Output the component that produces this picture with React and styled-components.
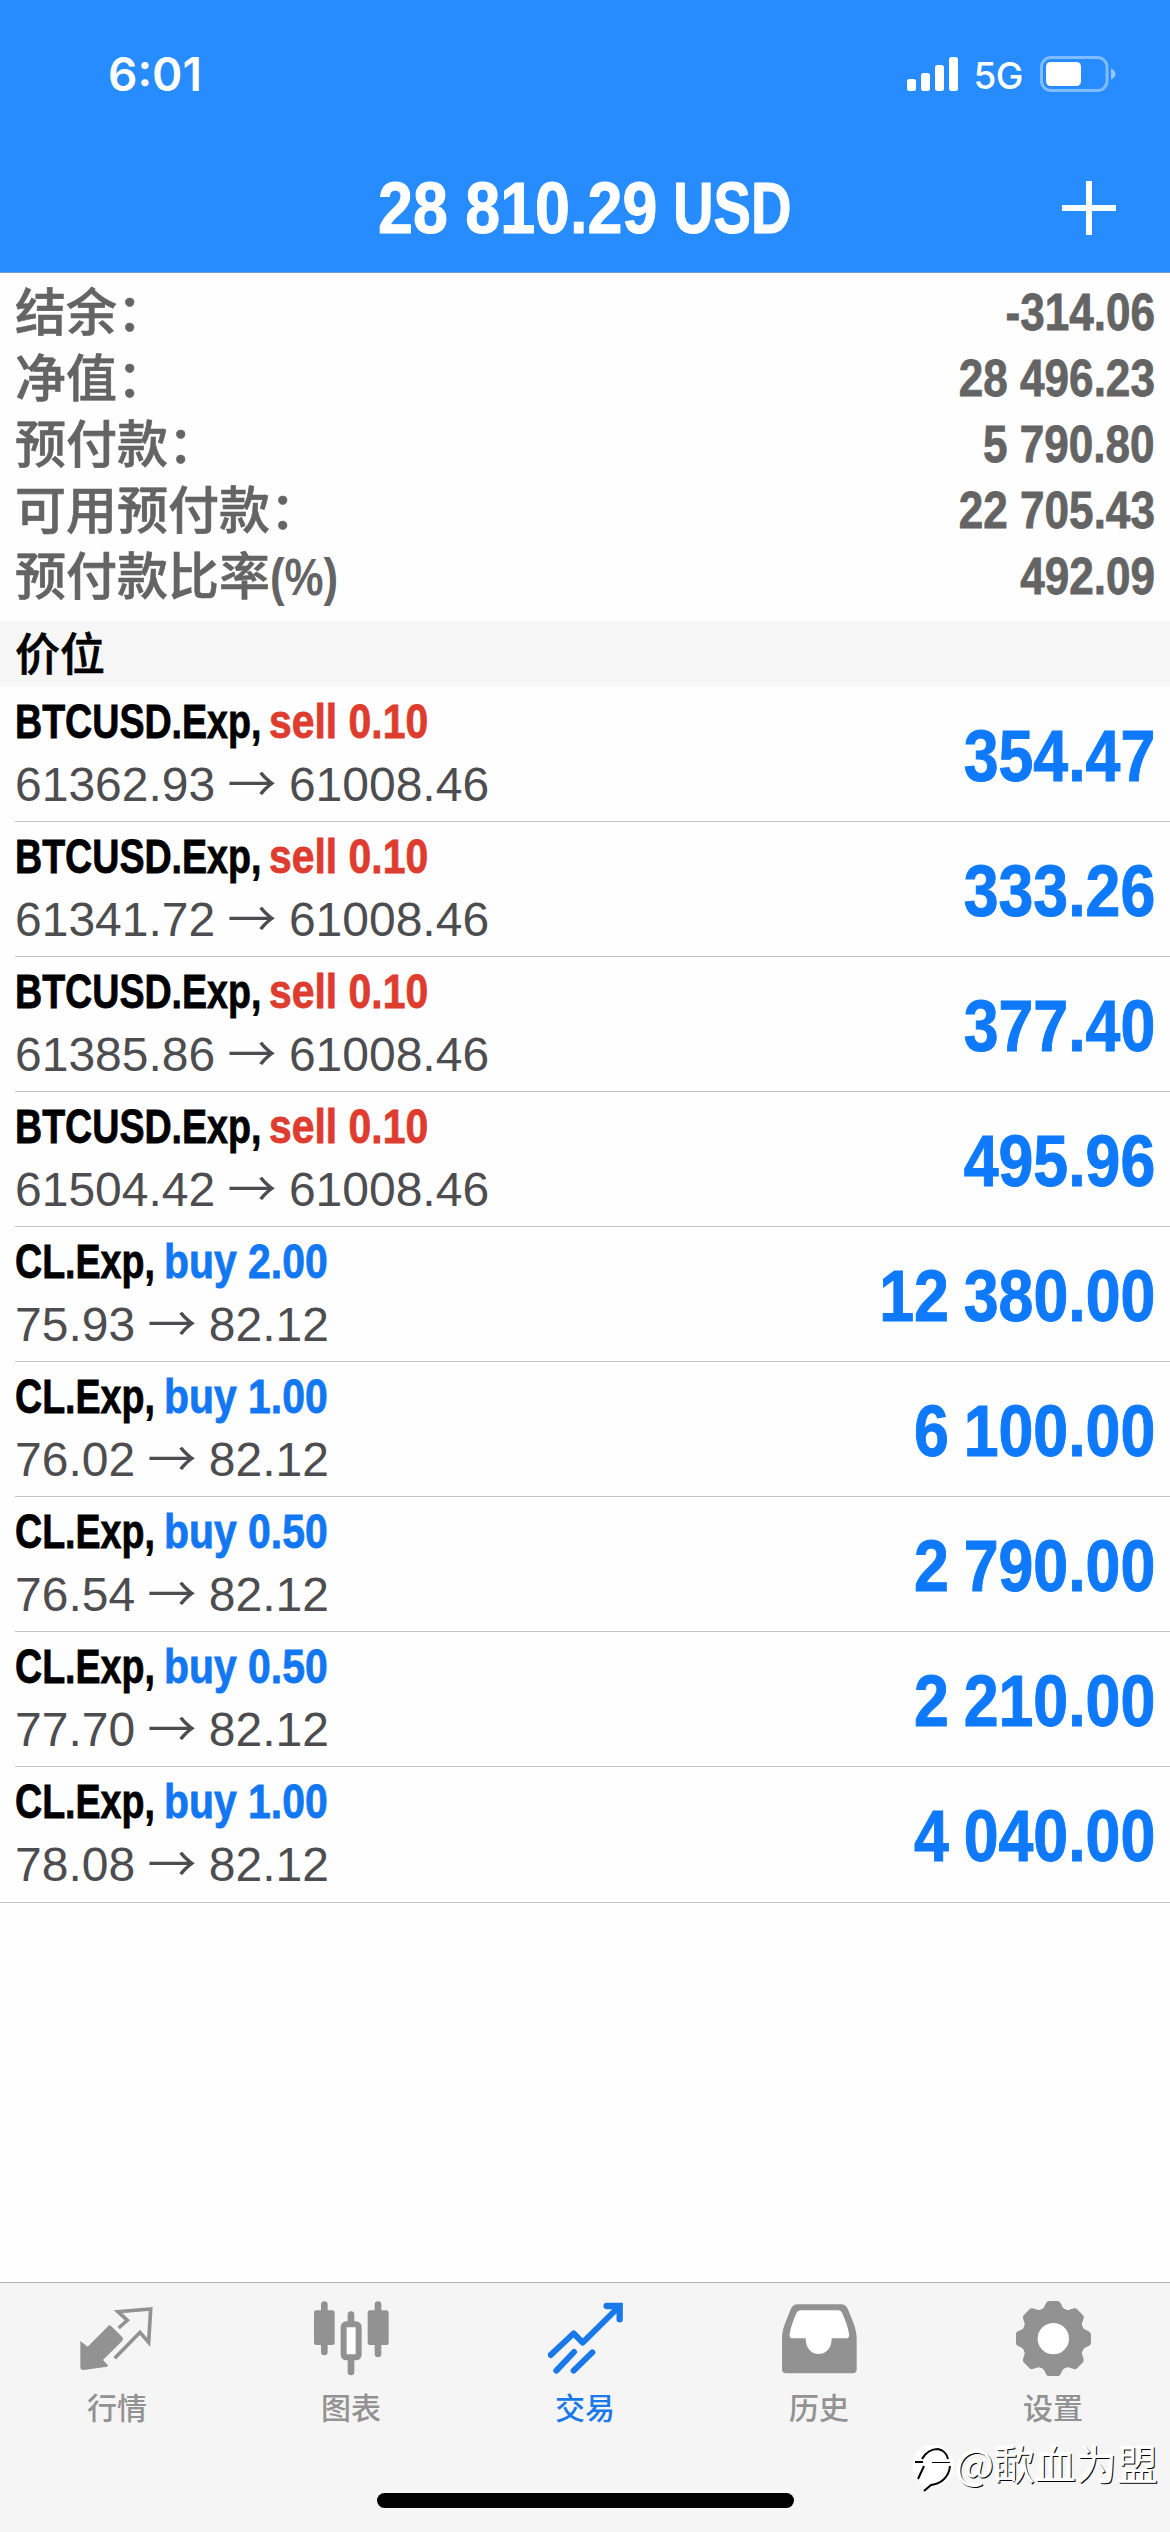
import React, { Component } from 'react';
import styled, { createGlobalStyle } from 'styled-components';

const GlobalStyle = createGlobalStyle`
    * { box-sizing: border-box; }
    body {
        margin: 0;
        background: #fefefe;
        font-family: "Liberation Sans", "Noto Sans CJK SC", sans-serif;
    }`

const Screen = styled.div`
    position: relative;
    display: flex;
    flex-direction: column;
    width: 1170px;
    height: 2532px;
    overflow: hidden;
    background: #fefefe;`

const Header = styled.header`
    height: 273px;
    background: #268cff;
    border-bottom: 1px solid #6f9fd8;
    color: #fff;`

const StatusBar = styled.div`
    display: flex;
    align-items: center;
    justify-content: space-between;
    height: 142px;
    padding: 6px 54px 0 108px;
    font-family: Inter, sans-serif;`

const Clock = styled.span`
    font-size: 46px;
    font-weight: 600;
    line-height: 60px;`

const StatusIcons = styled.div`
    display: flex;
    align-items: center;`

const Network = styled.span`
    margin: 4px 17px 0 14px;
    font-size: 37px;
    font-weight: 500;
    line-height: 48px;
    letter-spacing: -0.5px;`

const NavBar = styled.div`
    display: grid;
    grid-template-columns: 1fr auto 1fr;
    align-items: center;
    height: 131px;
    padding: 0 54px;`

const Title = styled.h1`
    grid-column: 2;
    display: flex;
    margin: 0;
    font-size: 72px;
    line-height: 80px;
    white-space: nowrap;
    -webkit-text-stroke: 1px currentColor;`

const Balance = styled.span`
    width: 295px;
    transform: scaleX(0.872);
    transform-origin: left;`

const Currency = styled.span`
    width: 119px;
    transform: scaleX(0.78);
    transform-origin: left;`

const AddButton = styled.button`
    justify-self: end;
    display: flex;
    padding: 0;
    border: 0;
    background: none;
    color: inherit;`

const Summary = styled.section`
    padding: 7px 15px 11px;`

const SummaryRow = styled.div`
    display: flex;
    justify-content: space-between;
    height: 66px;
    font-size: 51px;
    font-weight: 500;
    line-height: 66px;
    color: #646464;`

const Label = styled.span`
    padding-top: 1px;
    -webkit-text-stroke: 0.6px currentColor;`

const Unit = styled.span`
    display: inline-block;
    font-weight: bold;
    -webkit-text-stroke: 0;
    transform: scaleX(0.86);
    transform-origin: left;`

const Amount = styled.span`
    font-weight: bold;
    white-space: nowrap;
    -webkit-text-stroke: 0.8px currentColor;
    transform: scaleX(0.864);
    transform-origin: right;`

const SectionTitle = styled.h2`
    height: 66px;
    margin: 0;
    padding: 2px 0 0 15px;
    background: #f6f6f6;
    border-bottom: 5px solid #f9f9f9;
    font-size: 45px;
    font-weight: 500;
    line-height: 66px;
    color: #000;
    -webkit-text-stroke: 0.6px currentColor;`

const Position = styled.div`
    display: flex;
    justify-content: space-between;
    height: 135px;
    margin-left: 15px;
    padding: 7px 15px 0 0;
    border-bottom: 1px solid #c3c3c5;

    /* the separator under the last position runs edge to edge */
    &:last-child {
        height: 136px;
        margin-left: 0;
        padding-left: 15px;
    }`

const Deal = styled.div`
    display: flex;
    font-size: 48px;
    font-weight: bold;
    line-height: 56px;
    white-space: nowrap;
    -webkit-text-stroke: 0.8px currentColor;`

const Ticker = styled.span`
    width: ${props => props.$width}px;
    color: #000;
    transform: scaleX(0.783);
    transform-origin: left;`

const Side = styled.span`
    color: ${props => props.$side === 'sell' ? '#dd3c2e' : '#1277f3'};
    transform: scaleX(0.852);
    transform-origin: left;`

const Prices = styled.div`
    font-size: 48px;
    line-height: 70px;
    color: #4d4d50;
    white-space: nowrap;`

const Arrow = styled.span`
    display: inline-block;
    width: 47px;
    font-family: "Noto Sans CJK SC", sans-serif;
    font-size: 49px;
    line-height: 60px;
    text-indent: -1px;
    vertical-align: -1px;`

const Profit = styled.div`
    font-size: 72px;
    font-weight: bold;
    line-height: 125px;
    color: #0e7afb;
    white-space: nowrap;
    word-spacing: -3px;
    -webkit-text-stroke: 1px currentColor;
    transform: scaleX(0.87);
    transform-origin: right;`

const TabBar = styled.nav`
    display: grid;
    grid-template-columns: repeat(5, 1fr);
    height: 250px;
    margin-top: auto;
    padding-top: 18px;
    border-top: 1px solid #b2b2b2;
    background: #f5f5f5;`

const Tab = styled.div`
    display: flex;
    flex-direction: column;
    align-items: center;
    font-size: 30px;
    font-weight: 500;
    line-height: 40px;
    color: ${props => props.$active ? '#1a79ea' : '#929292'};

    svg { margin-bottom: 13px; }`

const HomeIndicator = styled.div`
    position: absolute;
    left: 377px;
    bottom: 24px;
    width: 417px;
    height: 15px;
    border-radius: 8px;
    background: #000;`

const Watermark = styled.div`
    position: absolute;
    right: 12px;
    bottom: 40px;
    display: flex;
    align-items: center;
    font-family: "Noto Sans CJK SC", sans-serif;
    font-size: 41px;
    line-height: 60px;
    color: #fff;
    text-shadow: 1px 1px 0 #000, -1px -1px 1px #fff;
    white-space: nowrap;

    svg { margin-top: 11px; }`

const summary = [
    { label: '结余：', value: '-314.06' },
    { label: '净值：', value: '28 496.23' },
    { label: '预付款：', value: '5 790.80' },
    { label: '可用预付款：', value: '22 705.43' },
    { label: '预付款比率', unit: '(%)', value: '492.09' }
]

const tickerWidths = { 'BTCUSD.Exp': 254, 'CL.Exp': 149 }

const SignalIcon = () => (
    <svg width="52" height="36" viewBox="0 0 52 36" fill="#fff">
        <rect x="0" y="23" width="9" height="12" rx="2.5" />
        <rect x="14" y="17" width="9" height="18" rx="2.5" />
        <rect x="28" y="9" width="9" height="26" rx="2.5" />
        <rect x="42" y="1" width="9" height="34" rx="2.5" />
    </svg>
)

const BatteryIcon = () => (
    <svg width="76" height="36" viewBox="0 0 76 36">
        <rect x="1.5" y="1.5" width="65.5" height="33" rx="9.5" fill="none" stroke="#fff" strokeOpacity="0.42" strokeWidth="3" />
        <rect x="6" y="6" width="35" height="24" rx="4.5" fill="#fff" />
        <path d="M71 12.500C77 15 77 21 71 23.500Z" fill="#fff" fillOpacity="0.5" />
    </svg>
)

const PlusIcon = () => (
    <svg width="54" height="54" viewBox="0 0 54 54" stroke="#fff" strokeWidth="6">
        <path d="M27 0V54M0 27H54" />
    </svg>
)

const TabIcon = ({ children }) => (
    <svg width="75" height="75" viewBox="0 0 225 225" fill="currentColor" stroke="none">{children}</svg>
)

const QuotesIcon = () => (
    <TabIcon>
        <path d="M1 120L23 137L84 76Q89 70 94 76L127 109Q132 114 127 119L69 177L84 193Q85 196 80 197L12 207Q1 208 1 198Z" />
        <path d="M116 81L142 58L114 32L212 24L206 124L180 94L104 172" fill="none" stroke="currentColor" strokeWidth="11" />
    </TabIcon>
)

const ChartIcon = () => (
    <TabIcon>
        <rect x="0" y="28" width="62" height="104" rx="7" />
        <rect x="21" y="1" width="20" height="162" rx="10" />
        <rect x="101" y="31" width="20" height="40" rx="10" />
        <rect x="101" y="165" width="20" height="58" rx="10" />
        <rect x="89" y="70" width="45" height="99" rx="8" fill="#fff" stroke="currentColor" strokeWidth="18" />
        <rect x="161" y="28" width="63" height="104" rx="7" />
        <rect x="182" y="1" width="20" height="168" rx="10" />
    </TabIcon>
)

const TradeIcon = () => (
    <TabIcon>
        <g fill="none" stroke="currentColor" strokeWidth="18" strokeLinecap="round">
            <path d="M8 162L77 97L104 125L214 16" strokeLinejoin="round" />
            <path d="M176 15H215V55" strokeWidth="19" />
            <path d="M25 209L78 153M77 209L133 154" />
        </g>
    </TabIcon>
)

const HistoryIcon = () => (
    <TabIcon>
        <path d="M46 10H178C190 10 196 20 200 30C212 60 224 85 224 112V205Q224 217 212 217H12Q0 217 0 205V112C0 85 12 60 24 30C28 20 34 10 46 10Z" />
        <path d="M56 28H168Q177 28 181 37C190 58 198 80 201 98Q203 112 192 112H149C149 142 133 159 110 159C87 159 71 142 71 112H32Q21 112 23 98C26 80 34 58 43 37Q47 28 56 28Z" fill="#fff" />
    </TabIcon>
)

const SettingsIcon = () => (
    <TabIcon>
        <g transform="translate(112 113)">
            <circle r="47" fill="#fff" />
            <circle r="71" fill="none" stroke="currentColor" strokeWidth="48" />
            {[0, 45, 90, 135, 180, 225, 270, 315].map(angle => (
                <path key={angle} d="M-42 -84C-28 -88 -27 -97 -22 -106Q-19 -113 -11 -113H11Q19 -113 22 -106C27 -97 28 -88 42 -84Z" transform={`rotate(${angle})`} />
            ))}
        </g>
    </TabIcon>
)

const WatermarkLogo = () => (
    <svg width="42" height="50" viewBox="0 0 42 50" fill="none">
        <circle cx="20" cy="24" r="21" fill="#fff" />
        <path d="M2 20H10M11 24L5 37M9 17C13 10 18 7 25 7C30 8 34 12 35 17M37 24C36 35 28 42 18 43L11 49" stroke="#000" strokeWidth="2" />
        <path d="M19 20.500H37" stroke="#000" strokeWidth="1" />
    </svg>
)

const tabs = [
    { label: '行情', Icon: QuotesIcon },
    { label: '图表', Icon: ChartIcon },
    { label: '交易', Icon: TradeIcon, active: true },
    { label: '历史', Icon: HistoryIcon },
    { label: '设置', Icon: SettingsIcon }
]

class TradePage extends Component {
    state = {
        positions: [
            { symbol: 'BTCUSD.Exp', side: 'sell', volume: '0.10', open: '61362.93', current: '61008.46', profit: '354.47' },
            { symbol: 'BTCUSD.Exp', side: 'sell', volume: '0.10', open: '61341.72', current: '61008.46', profit: '333.26' },
            { symbol: 'BTCUSD.Exp', side: 'sell', volume: '0.10', open: '61385.86', current: '61008.46', profit: '377.40' },
            { symbol: 'BTCUSD.Exp', side: 'sell', volume: '0.10', open: '61504.42', current: '61008.46', profit: '495.96' },
            { symbol: 'CL.Exp', side: 'buy', volume: '2.00', open: '75.93', current: '82.12', profit: '12 380.00' },
            { symbol: 'CL.Exp', side: 'buy', volume: '1.00', open: '76.02', current: '82.12', profit: '6 100.00' },
            { symbol: 'CL.Exp', side: 'buy', volume: '0.50', open: '76.54', current: '82.12', profit: '2 790.00' },
            { symbol: 'CL.Exp', side: 'buy', volume: '0.50', open: '77.70', current: '82.12', profit: '2 210.00' },
            { symbol: 'CL.Exp', side: 'buy', volume: '1.00', open: '78.08', current: '82.12', profit: '4 040.00' }
        ]
    }

    render() {
        const positionLoop = this.state.positions.map((item, i) => {
            return (
                <Position key={i}>
                    <div>
                        <Deal>
                            <Ticker $width={tickerWidths[item.symbol]}>{item.symbol},</Ticker>
                            <Side $side={item.side}>{item.side} {item.volume}</Side>
                        </Deal>
                        <Prices>{item.open} <Arrow>→</Arrow> {item.current}</Prices>
                    </div>
                    <Profit>{item.profit}</Profit>
                </Position>
            )
        })

        return (
            <Screen>
                <GlobalStyle />
                <Header>
                    <StatusBar>
                        <Clock>6:01</Clock>
                        <StatusIcons>
                            <SignalIcon />
                            <Network>5G</Network>
                            <BatteryIcon />
                        </StatusIcons>
                    </StatusBar>
                    <NavBar>
                        <Title>
                            <Balance>28 810.29</Balance>
                            <Currency>USD</Currency>
                        </Title>
                        <AddButton><PlusIcon /></AddButton>
                    </NavBar>
                </Header>
                <Summary>
                    {summary.map(row => (
                        <SummaryRow key={row.label}>
                            <Label>{row.label}{row.unit && <Unit>{row.unit}</Unit>}</Label>
                            <Amount>{row.value}</Amount>
                        </SummaryRow>
                    ))}
                </Summary>
                <SectionTitle>价位</SectionTitle>
                <div>{positionLoop}</div>
                <TabBar>
                    {tabs.map(({ label, Icon, active }) => (
                        <Tab key={label} $active={active}>
                            <Icon />
                            {label}
                        </Tab>
                    ))}
                </TabBar>
                <HomeIndicator />
                <Watermark>
                    <WatermarkLogo />
                    @歃血为盟
                </Watermark>
            </Screen>
        );
    }
}

export default TradePage;
